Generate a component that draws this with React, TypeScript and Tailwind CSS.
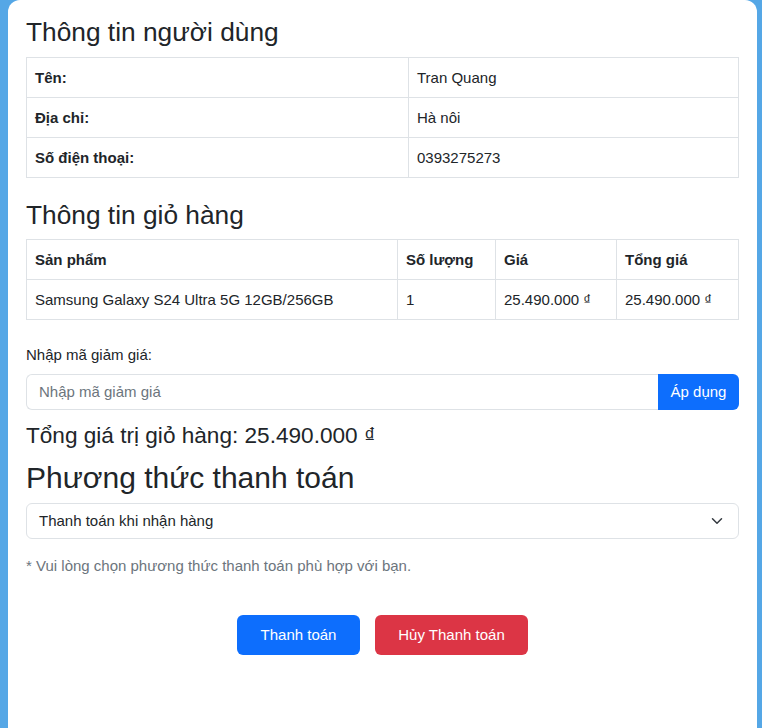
export default function App() {
  const font = { fontFamily: '"Liberation Sans", Arial, sans-serif' };
  return (
    <div className="min-h-screen bg-[#55a7e6] pl-[8px] pr-[5px]" style={font}>
      <div className="min-h-[728px] rounded-t-[12px] bg-white px-[18px] pt-[17px] text-[#212529]">
        <h3 className="mb-[8px] text-[26.3px] leading-[1.2]">Thông tin người dùng</h3>
        <table className="mb-[22px] w-full border-collapse border border-[#dee2e6] text-[15px]">
          <tbody>
            <tr>
              <th className="w-[382px] border border-[#dee2e6] p-2 text-left leading-[23px] font-bold">Tên:</th>
              <td className="border border-[#dee2e6] p-2 leading-[23px]">Tran Quang</td>
            </tr>
            <tr>
              <th className="border border-[#dee2e6] p-2 text-left leading-[23px] font-bold">Địa chỉ:</th>
              <td className="border border-[#dee2e6] p-2 leading-[23px]">Hà nôi</td>
            </tr>
            <tr>
              <th className="border border-[#dee2e6] p-2 text-left leading-[23px] font-bold">Số điện thoại:</th>
              <td className="border border-[#dee2e6] p-2 leading-[23px]">0393275273</td>
            </tr>
          </tbody>
        </table>

        <h3 className="mb-[8px] text-[26.3px] leading-[1.2]">Thông tin giỏ hàng</h3>
        <table className="mb-[24px] w-full border-collapse border border-[#dee2e6] text-[15px]">
          <thead>
            <tr>
              <th className="w-[371px] border border-[#dee2e6] p-2 text-left leading-[23px] font-bold">Sản phẩm</th>
              <th className="w-[98px] border border-[#dee2e6] p-2 text-left leading-[23px] font-bold">Số lượng</th>
              <th className="w-[121px] border border-[#dee2e6] p-2 text-left leading-[23px] font-bold">Giá</th>
              <th className="border border-[#dee2e6] p-2 text-left leading-[23px] font-bold">Tổng giá</th>
            </tr>
          </thead>
          <tbody>
            <tr>
              <td className="border border-[#dee2e6] p-2 leading-[23px]">Samsung Galaxy S24 Ultra 5G 12GB/256GB</td>
              <td className="border border-[#dee2e6] p-2 leading-[23px]">1</td>
              <td className="border border-[#dee2e6] p-2 leading-[23px]">25.490.000 ₫</td>
              <td className="border border-[#dee2e6] p-2 leading-[23px]">25.490.000 ₫</td>
            </tr>
          </tbody>
        </table>

        <label className="mb-[8px] block text-[15px] leading-[22px]">Nhập mã giảm giá:</label>
        <div className="mb-[12px] flex h-[36px]">
          <input
            className="min-w-0 flex-1 rounded-l-[6px] border border-r-0 border-[#dee2e6] px-[12px] text-[15px] outline-none placeholder:text-[#6c757d]"
            placeholder="Nhập mã giảm giá"
          />
          <button className="w-[81px] rounded-r-[6px] bg-[#0d6efd] text-[15px] text-white">Áp dụng</button>
        </div>

        <h4 className="mb-[11px] text-[22.6px] leading-[1.2]">Tổng giá trị giỏ hàng: 25.490.000 ₫</h4>
        <h2 className="mb-[7px] text-[30px] leading-[1.2]">Phương thức thanh toán</h2>

        <div className="mb-[16px] flex h-[36px] items-center justify-between rounded-[6px] border border-[#dee2e6] pl-[12px] pr-[15px] text-[15px]">
          <span>Thanh toán khi nhận hàng</span>
          <svg width="12" height="12" viewBox="0 0 16 16" fill="none" stroke="#343a40" strokeWidth="2" strokeLinecap="round" strokeLinejoin="round">
            <path d="M2 5l6 6 6-6" />
          </svg>
        </div>

        <p className="mb-[38px] text-[15px] leading-[22px] text-[#6c757d]">
          * Vui lòng chọn phương thức thanh toán phù hợp với bạn.
        </p>

        <div className="flex justify-center gap-[15px]">
          <button className="h-[40px] w-[123px] rounded-[6px] bg-[#0d6efd] text-[15px] text-white">Thanh toán</button>
          <button className="h-[40px] w-[153px] rounded-[6px] bg-[#dc3545] text-[15px] text-white">Hủy Thanh toán</button>
        </div>
      </div>
    </div>
  );
}
